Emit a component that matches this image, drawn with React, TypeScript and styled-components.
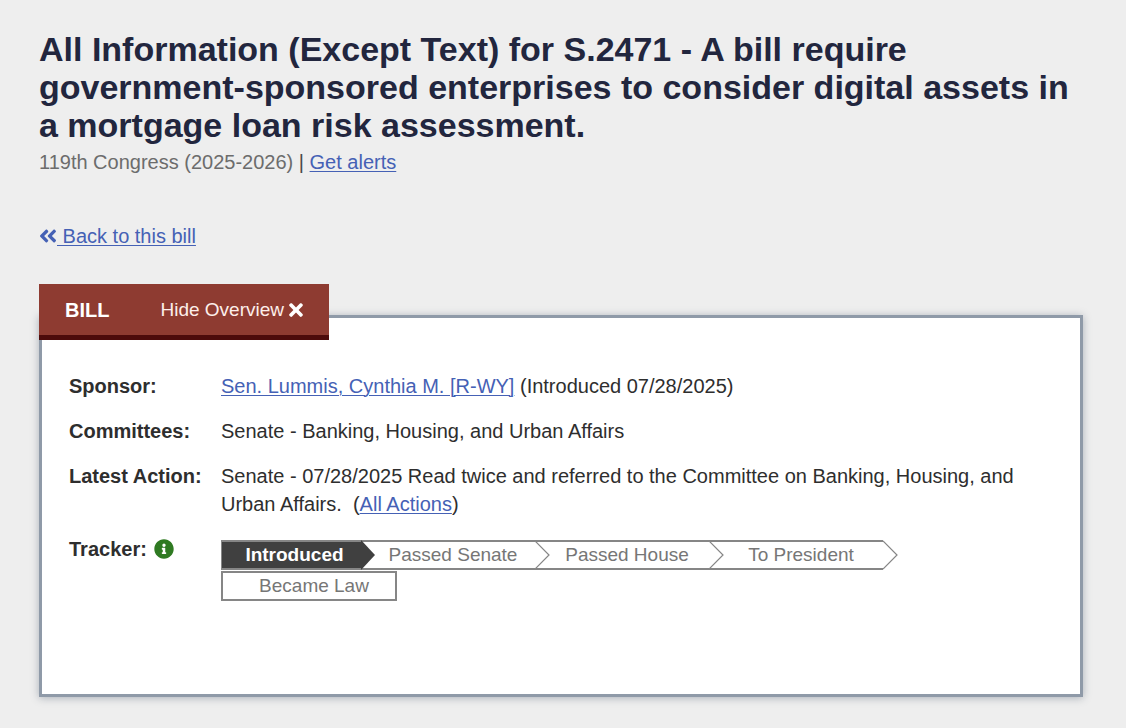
import React from "react";
import styled, { createGlobalStyle, css } from "styled-components";
import { FaAngleDoubleLeft, FaInfoCircle, FaTimes } from "react-icons/fa";

const GlobalStyle = createGlobalStyle`
  *, *::before, *::after { box-sizing: border-box; }
  body {
    margin: 0;
    background: #eeeeee;
    color: #2e2e2e;
    font-family: "Liberation Sans", Arial, Helvetica, sans-serif;
    font-size: 20px;
    line-height: 28px;
  }
`;

const Page = styled.main`
  padding: 30px 43px 31px 39px;
`;

const Title = styled.h1`
  margin: 0;
  color: #22263e;
  font-size: 34px;
  line-height: 38px;
  font-weight: 700;
`;

const Congress = styled.p`
  margin: 4px 0 0;
  color: #6c6c6c;
`;

const Divider = styled.span`
  color: #4a4a4a;
`;

const Link = styled.a`
  color: #4561b5;
  text-decoration: underline;
  text-decoration-thickness: 1px;
  text-underline-offset: 2px;
`;

const BackNav = styled.nav`
  display: flex;
  margin-top: 46px;
`;

const BackLink = styled(Link)`
  display: inline-flex;
  align-items: center;
  white-space: pre;
  svg { width: 18px; height: 22px; }
`;

const Tab = styled.div`
  position: relative;
  z-index: 1;
  display: flex;
  align-items: center;
  justify-content: space-between;
  width: 290px;
  height: 56px;
  margin-top: 34px;
  margin-bottom: -25px;
  padding: 0 23px 0 26px;
  background: #8e3b31;
  border-bottom: 5px solid #4d0b0b;
  color: #ffffff;
`;

const TabName = styled.h2`
  margin: 0;
  font-size: 20px;
  line-height: 28px;
`;

const ToggleButton = styled.button`
  display: flex;
  align-items: center;
  gap: 2px;
  padding: 0;
  border: 0;
  background: none;
  color: #fdeeea;
  font: inherit;
  font-size: 19px;
  cursor: pointer;
  svg { color: #ffffff; }
`;

const Panel = styled.section`
  min-height: 382px;
  padding: 54px 27px 40px;
  background: #ffffff;
  border: 3px solid #8f9aa8;
  box-shadow: 0 1px 8px rgba(70, 85, 105, 0.4);
`;

const Facts = styled.dl`
  display: grid;
  grid-template-columns: 152px 1fr;
  row-gap: 17px;
  margin: 0;
`;

const Label = styled.dt`
  display: flex;
  align-items: center;
  align-self: start;
  gap: 7px;
  font-weight: 700;
`;

const Value = styled.dd`
  margin: 0;
`;

const ActionsNote = styled.span`
  display: inline-block;
  white-space: nowrap;
`;

const InfoButton = styled.button`
  display: flex;
  padding: 0;
  border: 0;
  background: none;
  color: #2f7a22;
  cursor: pointer;
`;

const Tracker = styled.ol`
  display: flex;
  flex-wrap: wrap;
  row-gap: 1px;
  margin: 5px 0 0;
  padding: 0;
  list-style: none;
`;

const Step = styled.li<{ $kind: "current" | "next" | "last" }>`
  position: relative;
  width: 174px;
  height: 30px;
  padding-left: 10px;
  border: solid #868686;
  border-width: 2px 0;
  color: #767676;
  font-size: 19px;
  line-height: 26px;
  text-align: center;
  ${({ $kind }) => $kind === "current" && css`
    width: 140px;
    padding-left: 6px;
    border-left-width: 1px;
    background: #404040;
    color: #ffffff;
    font-weight: 700;
  `}
  ${({ $kind }) => $kind === "last" && css`
    width: 176px;
    border-width: 2px;
  `}
`;

const StepTip = styled.svg`
  position: absolute;
  z-index: 1;
  top: -2px;
  left: 100%;
  width: 15px;
  height: 30px;
`;

const steps = [
  { name: "Introduced", kind: "current" },
  { name: "Passed Senate", kind: "next" },
  { name: "Passed House", kind: "next" },
  { name: "To President", kind: "next" },
  { name: "Became Law", kind: "last" },
] as const;

export default function App() {
  return (
    <>
      <GlobalStyle />
      <Page>
        <header>
          <Title>
            All Information (Except Text) for S.2471 - A bill require
            government-sponsored enterprises to consider digital assets in a
            mortgage loan risk assessment.
          </Title>
          <Congress>
            119th Congress (2025-2026) <Divider>|</Divider>{" "}
            <Link href="#alerts">Get alerts</Link>
          </Congress>
        </header>
        <BackNav>
          <BackLink href="#bill">
            <FaAngleDoubleLeft aria-hidden />
            <span> Back to this bill</span>
          </BackLink>
        </BackNav>
        <Tab>
          <TabName>BILL</TabName>
          <ToggleButton type="button">
            Hide Overview <FaTimes size={20} aria-hidden />
          </ToggleButton>
        </Tab>
        <Panel>
          <Facts>
            <Label>Sponsor:</Label>
            <Value>
              <Link href="#sponsor">Sen. Lummis, Cynthia M. [R-WY]</Link>{" "}
              (Introduced 07/28/2025)
            </Value>
            <Label>Committees:</Label>
            <Value>Senate - Banking, Housing, and Urban Affairs</Value>
            <Label>Latest Action:</Label>
            <Value>
              Senate - 07/28/2025 Read twice and referred to the Committee on
              Banking, Housing, and Urban Affairs.{"\u00a0 "}
              <ActionsNote>
                (<Link href="#actions">All Actions</Link>)
              </ActionsNote>
            </Value>
            <Label>
              Tracker:
              <InfoButton type="button" aria-label="About the tracker">
                <FaInfoCircle size={20} />
              </InfoButton>
            </Label>
            <Value>
              <Tracker>
                {steps.map(({ name, kind }) => (
                  <Step key={name} $kind={kind}>
                    {name}
                    {kind !== "last" && (
                      <StepTip viewBox="0 0 15 30" aria-hidden>
                        {kind === "current" ? (
                          <path d="M-1 0H0L14 15L0 30H-1Z" fill="#404040" />
                        ) : (
                          <path d="M0 1L14 15L0 29" fill="#fff" stroke="#868686" strokeWidth="1.2" />
                        )}
                      </StepTip>
                    )}
                  </Step>
                ))}
              </Tracker>
            </Value>
          </Facts>
        </Panel>
      </Page>
    </>
  );
}
